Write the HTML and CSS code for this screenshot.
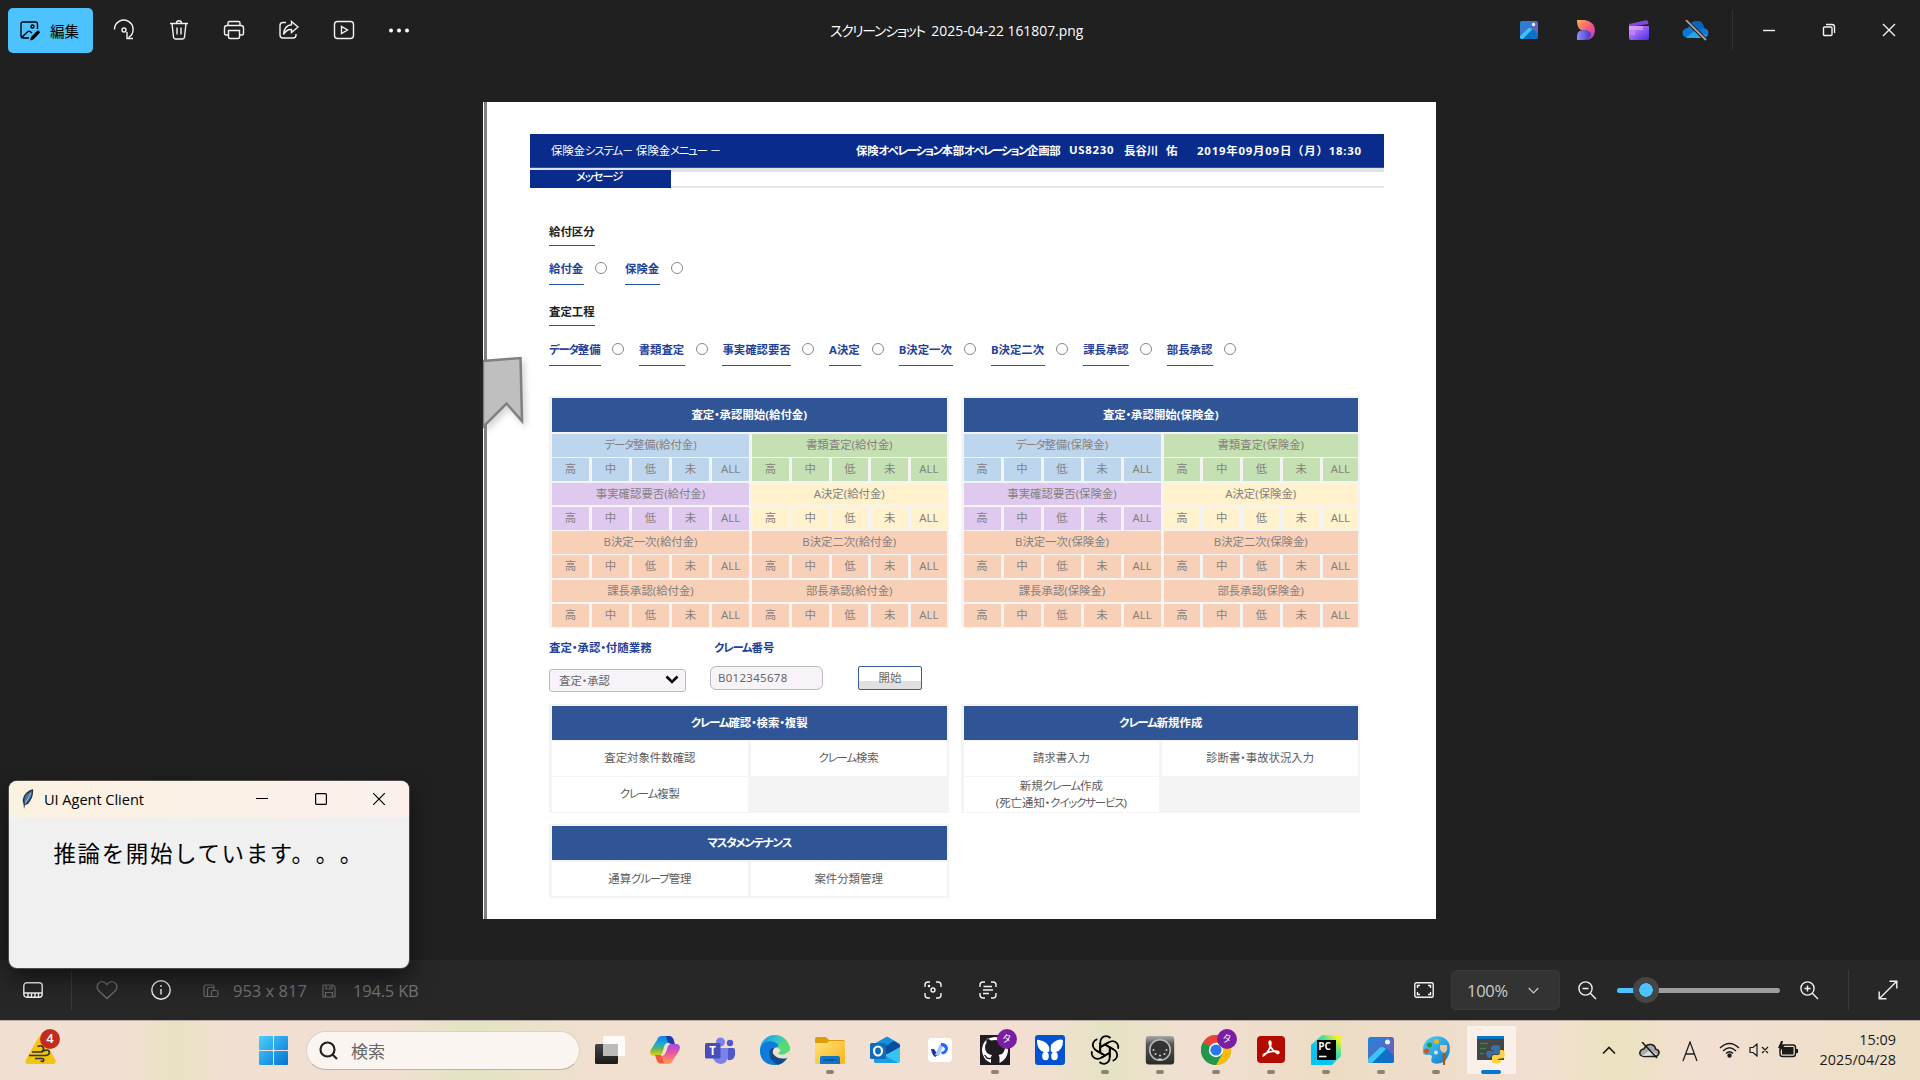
FILE: index.html
```html
<!DOCTYPE html>
<html lang="ja">
<head>
<meta charset="utf-8">
<title>スクリーンショット 2025-04-22 161807.png</title>
<link rel="stylesheet" href="styles.css">
</head>
<body>
<div class="screen">

<header class="topbar">
  <div class="edit">
    <svg width="20" height="20" viewBox="0 0 20 20" fill="none" stroke="#000" stroke-width="1.4"><path d="M9 17H3.2Q1 17 1 14.800V2.700Q1 1 3 1H15.500Q17.500 1 17.500 3V8M2 16L8 10.500Q9 9.700 10 10.500L12 12"/><circle cx="12.500" cy="5.500" r="1.500"/><path d="M10 19.500L11 16L17.500 9.500Q19.500 9 20 11.500L13.500 18.500Z" fill="#000" stroke="none"/></svg>
    <span>編集</span>
  </div>
  <nav class="tools">
    <i><svg width="22" height="22" viewBox="0 0 22 22" class="ln"><path d="M1.500 10.500A9.300 9.300 0 1 1 15.500 18.500M14 13V19.500H20"/><circle cx="11" cy="11" r="2"/></svg></i>
    <i><svg width="22" height="22" viewBox="0 0 22 22" class="ln"><path d="M2 4.500H20M4 4.500L5.500 18Q5.700 20 7.500 20H14.500Q16.300 20 16.500 18L18 4.500M8.500 4Q8.500 1.700 11 1.700Q13.500 1.700 13.500 4M9 8.500V15.500M13 8.500V15.500"/></svg></i>
    <i><svg width="22" height="22" viewBox="0 0 22 22" class="ln"><path d="M5 16H3Q1.500 16 1.500 14V9Q1.500 6.500 4 6.500H18Q20.500 6.500 20.500 9V14Q20.500 16 19 16H17M5 6.500V4Q5 2.500 6.500 2.500H15.500Q17 2.500 17 4V6.500M5.500 11.500H16.500V18Q16.500 19.500 15 19.500H7Q5.500 19.500 5.500 18Z"/></svg></i>
    <i><svg width="22" height="22" viewBox="0 0 22 22" class="ln"><path d="M8 3.500H5Q2 3.500 2 6.500V16Q2 19 5 19H15Q18 19 18 16V15M13.500 2.500L20 8L13.500 13.500V10.500Q8.500 10 5.500 15.500Q6 6.500 13.500 5.700Z"/></svg></i>
    <i><svg width="22" height="22" viewBox="0 0 22 22" class="ln"><rect x="1.500" y="2.500" width="19" height="17" rx="3"/><path d="M8.500 7.500V14.500L14.500 11Z"/></svg></i>
    <i><svg width="22" height="22" viewBox="0 0 22 22" fill="#fff"><circle cx="3" cy="11.500" r="2"/><circle cx="11" cy="11.500" r="2"/><circle cx="19" cy="11.500" r="2"/></svg></i>
  </nav>
  <div class="filename"><span class="kt">スクリーンショット</span> 2025-04-22 161807.png</div>
  <div class="apps">
    <svg width="18" height="18" viewBox="0 0 26 26"><use href="#photos"/></svg>
    <svg width="20" height="22" viewBox="0 0 20 22"><path d="M1 1H9Q19 3 19 12Q18 20 11 21Q14 15 10 11H5Q1 9 1 1Z" fill="url(#ds1)"/><path d="M1 21V17Q1 11 8 11Q14 11 15 15Q15 21 7 21Z" fill="url(#ds2)"/></svg>
    <svg width="20" height="20" viewBox="0 0 20 20"><path d="M0 4L17 .2Q19 0 19.300 2V4L0 7Z" fill="#8547d8"/><path d="M0 6H20V18Q20 20 18 20H2Q0 20 0 18Z" fill="url(#clip)"/><path d="M0 10H6V15H0Z" fill="#b884f8"/><path d="M0 6H14V10H0Z" fill="#e6a6f9" opacity=".6"/></svg>
    <svg width="27" height="21" viewBox="0 0 27 21"><path d="M6 18Q0 17 .5 12Q2 8 6 8Q9 0 16 1Q21 2 22 8Q27 9 26.500 14Q25 18 22 18Z" fill="#0a78d4"/><path d="M4 17.500L14 10L25 15.500Q24 18 21 18H6Z" fill="#28a8ea"/><path d="M11 3Q20-3 22 8L18 10Z" fill="#0364b8"/><path d="M4 0L24 20" stroke="#202020" stroke-width="4"/><path d="M4 0L24 20" stroke="#a6a19c" stroke-width="1.800"/></svg>
  </div>
  <div class="caption">
    <i><svg width="14" height="14" viewBox="0 0 14 14" class="ln"><path d="M1 7.500H13"/></svg></i>
    <i><svg width="14" height="14" viewBox="0 0 14 14" class="ln"><rect x="1.500" y="4" width="8.500" height="8.500" rx="1"/><path d="M4 1.500H10Q12.500 1.500 12.500 4V10" /></svg></i>
    <i><svg width="14" height="14" viewBox="0 0 14 14" class="ln"><path d="M1 1L13 13M13 1L1 13"/></svg></i>
  </div>
</header>

<main class="viewer">
  <article class="doc">
    <svg class="ribbon" width="48" height="80" viewBox="0 0 48 80"><path d="M0 6L37.500 3L39 66L23.500 48.500L0 72Z" fill="#bfbfbf" stroke="#808080" stroke-width="2.500"/></svg>
    <div class="page">
      <div class="banner">
        <div class="b-left">保険金<span class="k">システム</span>－ 保険金<span class="k">メニュー</span> －</div>
        <div class="b-right"><span class="dept">保険<span class="k">オペレーション</span>本部<span class="k">オペレーション</span>企画部</span><span class="uid">US8230</span><span class="nm">長谷川</span><span class="nm2">佑</span><span class="date">2019年09月09日（月）18:30</span></div>
      </div>
      <div class="msg"><div class="tab"><span class="k">メッセージ</span></div><div class="rule"></div></div>

      <div class="body">
        <div class="ul black w4 s1">給付区分</div>
        <div class="radios r1"><span class="ul w3">給付金</span><i class="rd"></i><span class="ul w3">保険金</span><i class="rd"></i></div>
        <div class="ul black w4 s2">査定工程</div>
        <div class="radios r2">
          <span class="ul w5"><span class="k">データ</span>整備</span><i class="rd"></i><span class="ul w4">書類査定</span><i class="rd"></i><span class="ul w6">事実確認要否</span><i class="rd"></i><span class="ul wa">A決定</span><i class="rd"></i><span class="ul wb">B決定一次</span><i class="rd"></i><span class="ul wb">B決定二次</span><i class="rd"></i><span class="ul w4">課長承認</span><i class="rd"></i><span class="ul w4">部長承認</span><i class="rd"></i>
        </div>

        <div class="pair">
          <section class="tbl">
            <h2>査定<span class="d">・</span>承認開始(給付金)</h2>
            <div class="grid">
              <b class="bl"><span class="k">データ</span>整備(給付金)</b><b class="gr">書類査定(給付金)</b>
              <u class="bl">高</u><u class="bl">中</u><u class="bl">低</u><u class="bl">未</u><u class="bl">ALL</u><u class="gr">高</u><u class="gr">中</u><u class="gr">低</u><u class="gr">未</u><u class="gr">ALL</u>
              <b class="pu">事実確認要否(給付金)</b><b class="ye">A決定(給付金)</b>
              <u class="pu">高</u><u class="pu">中</u><u class="pu">低</u><u class="pu">未</u><u class="pu">ALL</u><u class="ye">高</u><u class="ye">中</u><u class="ye">低</u><u class="ye">未</u><u class="ye">ALL</u>
              <b>B決定一次(給付金)</b><b>B決定二次(給付金)</b>
              <u>高</u><u>中</u><u>低</u><u>未</u><u>ALL</u><u>高</u><u>中</u><u>低</u><u>未</u><u>ALL</u>
              <b>課長承認(給付金)</b><b>部長承認(給付金)</b>
              <u>高</u><u>中</u><u>低</u><u>未</u><u>ALL</u><u>高</u><u>中</u><u>低</u><u>未</u><u>ALL</u>
            </div>
          </section>
          <section class="tbl">
            <h2>査定<span class="d">・</span>承認開始(保険金)</h2>
            <div class="grid">
              <b class="bl"><span class="k">データ</span>整備(保険金)</b><b class="gr">書類査定(保険金)</b>
              <u class="bl">高</u><u class="bl">中</u><u class="bl">低</u><u class="bl">未</u><u class="bl">ALL</u><u class="gr">高</u><u class="gr">中</u><u class="gr">低</u><u class="gr">未</u><u class="gr">ALL</u>
              <b class="pu">事実確認要否(保険金)</b><b class="ye">A決定(保険金)</b>
              <u class="pu">高</u><u class="pu">中</u><u class="pu">低</u><u class="pu">未</u><u class="pu">ALL</u><u class="ye">高</u><u class="ye">中</u><u class="ye">低</u><u class="ye">未</u><u class="ye">ALL</u>
              <b>B決定一次(保険金)</b><b>B決定二次(保険金)</b>
              <u>高</u><u>中</u><u>低</u><u>未</u><u>ALL</u><u>高</u><u>中</u><u>低</u><u>未</u><u>ALL</u>
              <b>課長承認(保険金)</b><b>部長承認(保険金)</b>
              <u>高</u><u>中</u><u>低</u><u>未</u><u>ALL</u><u>高</u><u>中</u><u>低</u><u>未</u><u>ALL</u>
            </div>
          </section>
        </div>

        <div class="labels"><span class="l1">査定<span class="d">・</span>承認<span class="d">・</span>付随業務</span><span><span class="k">クレーム</span>番号</span></div>
        <div class="form">
          <div class="select"><span>査定<span class="d">・</span>承認</span><svg width="14" height="10" viewBox="0 0 14 10" fill="none" stroke="#000" stroke-width="2.600"><path d="M1.500 1.500L7 7L12.500 1.500"/></svg></div>
          <div class="input">B012345678</div>
          <div class="start">開始</div>
        </div>

        <div class="pair menus">
          <section class="tbl menu">
            <h2><span class="k">クレーム</span>確認<span class="d">・</span>検索<span class="d">・</span>複製</h2>
            <div class="cells"><p>査定対象件数確認</p><p><span class="k">クレーム</span>検索</p><p><span class="k">クレーム</span>複製</p></div>
          </section>
          <section class="tbl menu">
            <h2><span class="k">クレーム</span>新規作成</h2>
            <div class="cells"><p>請求書入力</p><p>診断書<span class="d">・</span>事故状況入力</p><p class="two">新規<span class="k">クレーム</span>作成<br>(死亡通知<span class="d">・</span><span class="k">クイックサービス</span>)</p></div>
          </section>
        </div>
        <section class="tbl menu last">
          <h2><span class="k">マスタメンテナンス</span></h2>
          <div class="cells one"><p>通算<span class="k">グループ</span>管理</p><p>案件分類管理</p></div>
        </section>
      </div>
    </div>
  </article>
</main>

<footer class="status">
  <div class="st-left">
    <svg class="film ln" width="20" height="16" viewBox="0 0 20 16"><rect x=".8" y=".8" width="18.400" height="14.400" rx="3"/><path d="M1 11H19M5 11V15M8.500 11V15M12 11V15M15.500 11V15"/></svg>
    <i class="div"></i>
    <svg class="heart" width="22" height="20" viewBox="0 0 22 20" fill="none" stroke="#6a6a6a" stroke-width="1.400"><path d="M11 18.500L2.500 10.500Q0 7 2 4Q6-1 11 4.500Q16-1 20 4Q22 7 19.500 10.500Z"/></svg>
    <svg class="info ln" width="20" height="20" viewBox="0 0 20 20"><circle cx="10" cy="10" r="9.200"/><path d="M10 9V14.500M10 5V7"/></svg>
    <svg class="dim" width="16" height="14" viewBox="0 0 16 14"><path d="M4.500 12.500H2.500Q1 12.500 1 11V2.500Q1 1 2.500 1H9.500Q11 1 11 2.500V3.500M4.500 12.500V5.500Q4.500 3.500 6.500 3.500H9.500Q11 3.500 11 5V6.500M4.500 12.500H13.500Q15 12.500 15 11V8Q15 6.500 13.500 6.500H10Q8.500 6.500 8.500 8V12.500"/></svg>
    <span class="t1">953 x 817</span>
    <svg class="dim sv" width="14" height="14" viewBox="0 0 14 14"><path d="M1 1H11L13 3V13H1ZM4 1V5H10V1M3.500 13V8.500H10.500V13M8 2V4"/></svg>
    <span class="t2">194.5 KB</span>
  </div>
  <div class="st-mid">
    <svg width="18" height="18" viewBox="0 0 18 18" class="ln"><path d="M1 6V4Q1 1 4 1H6M12 1H14Q17 1 17 4V6M17 12V14Q17 17 14 17H12M6 17H4Q1 17 1 14V12"/><circle cx="9" cy="9" r="2"/><circle cx="5" cy="5" r=".6"/></svg>
    <svg width="18" height="18" viewBox="0 0 18 18" class="ln"><path d="M1 6V4Q1 1 4 1H6M12 1H14Q17 1 17 4V6M17 12V14Q17 17 14 17H12M6 17H4Q1 17 1 14V12M4.500 5.500H13M4 9H14M4 12.500H10"/></svg>
  </div>
  <div class="st-right">
    <svg class="fit ln" width="20" height="16" viewBox="0 0 20 16"><rect x=".8" y=".8" width="18.400" height="14.400" rx="1.500"/><path d="M3.500 6V3.500H6M14 3.500H16.500V6M16.500 10V12.500H14M6 12.500H3.500V10"/></svg>
    <div class="zoom">100%<svg width="11" height="7" viewBox="0 0 11 7" fill="none" stroke="#ccc" stroke-width="1.200"><path d="M.7 1L5.500 5.800L10.300 1"/></svg></div>
    <svg class="zo ln" width="19" height="19" viewBox="0 0 19 19"><circle cx="7.500" cy="7.500" r="6.600"/><path d="M12.300 12.300L18 18M4.500 7.500H10.500"/></svg>
    <div class="slider"><i></i></div>
    <svg class="zi ln" width="19" height="19" viewBox="0 0 19 19"><circle cx="7.500" cy="7.500" r="6.600"/><path d="M12.300 12.300L18 18M4.500 7.500H10.500M7.500 4.500V10.500"/></svg>
    <i class="div"></i>
    <svg class="ex ln" width="20" height="20" viewBox="0 0 20 20"><path d="M1.500 18.500L18.500 1.500M11.500 1.200H18.800V8.500M1.200 11.500V18.800H8.500"/></svg>
  </div>
</footer>

<div class="taskbar">
  <div class="weather">
    <svg width="32" height="30" viewBox="0 0 32 30"><path d="M12.500 5Q15.500-1 18.500 5L30.500 26Q31.500 30 28 30H3Q-.5 30 .7 26Z" fill="#f3c512"/><g fill="none" stroke="#333" stroke-width="1.700"><path d="M7 18H16Q19 17.500 18.500 14Q17 10.500 12.500 12.500M4 21.500H21Q25.500 20.500 24 17Q22 15 19 17M10 24.500H17Q20 25 18 27.500L15.500 27"/></g></svg>
    <span>4</span>
  </div>
  <svg class="win" width="29" height="29" viewBox="0 0 29 29" fill="url(#wn)"><rect width="14" height="14" rx="1"/><rect x="15" width="14" height="14" rx="1"/><rect y="15" width="14" height="14" rx="1"/><rect x="15" y="15" width="14" height="14" rx="1"/></svg>
  <div class="search"><svg width="19" height="19" viewBox="0 0 19 19" fill="none" stroke="#222" stroke-width="2.200"><circle cx="8.500" cy="8.500" r="7"/><path d="M13.500 13.500L18 18"/></svg>検索</div>
  <div class="pins">
    <i><svg width="30" height="30" viewBox="0 0 30 30"><rect x="0" y="9" width="23" height="20" rx="1.500" fill="url(#tv)"/><rect x="8" y="1" width="22" height="20" rx="1.500" fill="#fff" opacity=".85"/><path d="M8 9H23V21H8Z" fill="#bbb"/></svg></i>
    <i><svg width="30" height="30" viewBox="0 0 30 30"><path d="M7 5Q8 1 12 1H20Q23 2 24 6L18 8Q15 8 14 12L12 19Q11 21 8 21H3Q-1 20 .7 15Z" fill="url(#cp1)"/><path d="M23 25Q22 29 18 29H10Q7 28 6 23L12 21Q15 20 16 17L18 11Q19 9 22 9H27Q31 10 29.500 15Z" fill="url(#cp2)"/><path d="M16 1H20Q23 2 24 6L25 9H22Q18 9 17 5Z" fill="#1e3ea5"/><path d="M5 20H11L14 28H10Q7 27 5 20Z" fill="#f6573b"/></svg></i>
    <i><svg width="30" height="30" viewBox="0 0 30 30"><circle cx="15.500" cy="7" r="4.500" fill="#7b83eb"/><circle cx="25" cy="8" r="3.200" fill="#5059c9"/><path d="M19 13H28Q30 13 30 15V20Q29 26 23 25Z" fill="#5059c9"/><path d="M8 13H23V21Q22 29 15.500 29Q9 28 8 22Z" fill="#7b83eb"/><rect y="8" width="15.500" height="15.500" rx="1.500" fill="#464eb8"/><text x="4.300" y="20" font-family="Open Sans" font-weight="700" font-size="11.500" fill="#fff">T</text></svg></i>
    <i><svg width="30" height="30" viewBox="0 0 30 30"><circle cx="15" cy="15" r="15" fill="url(#ed)"/><path d="M1 12Q5 4 14 7Q21 10 17 14Q10 12 9 20Q10 27 18 30Q0 31 0 15Z" fill="#0c7bd9"/><path d="M9 17Q11 11 16 14Q14 20 21 22Q25 22 28 21Q25 28 18 30Q9 27 9 17Z" fill="#114a8b"/><path d="M13 15Q15 11 19 13Q22 16 18 18Q20 21 25 19Q29 17 30 15Q30 22 27 23Q19 25 14 20Q12 18 13 15Z" fill="#f0dfd0"/><path d="M17 13Q24 14 20 18Q24 20 28 17Q30 15 30 12Q27 8 20 8Z" fill="#55db76"/></svg></i>
    <i class="run"><svg width="30" height="30" viewBox="0 0 30 30"><path d="M0 4Q0 2 2 2H11L14 5H28Q30 5 30 7V14H0Z" fill="#e09b0b"/><path d="M0 8H12L14 6H29Q30 6 30 8V27Q30 29 28 29H2Q0 29 0 27Z" fill="url(#fd)"/><path d="M5 29V23Q5 21 7 21H23Q25 21 25 23V29Z" fill="#0f76c8"/><path d="M8.500 25H21.500" stroke="#064f8c" stroke-width="1.500"/></svg></i>
    <i><svg width="30" height="30" viewBox="0 0 30 30"><path d="M4 9L16 2Q17 1.500 18 2L30 9V12L14 18H4Z" fill="#1490df"/><path d="M14 12L24 6L30 10V13L17 21Z" fill="#0a4d9e"/><path d="M4 15L14 21L30 12V26Q30 28 28 28H6Q4 28 4 26Z" fill="#36c5f0"/><path d="M4 14L28 28H6Q4 28 4 26Z" fill="#1b9de2"/><rect y="8" width="16" height="16" rx="1.500" fill="#0f6cbd"/><ellipse cx="8" cy="16" rx="4" ry="4.500" fill="none" stroke="#fff" stroke-width="2.200"/></svg></i>
    <i><svg width="30" height="30" viewBox="0 0 30 30"><rect x="3" y="3" width="24" height="24" rx="4" fill="#fff"/><path d="M6 14H9L13 20L10 22Q7 20 6 14Z" fill="#20349f"/><path d="M10 20L15 9L18 11L14 21Z" fill="#a7c4ff"/><path d="M16 8H18Q23 9 23 14Q22 19 17 19.500L16 17Q20 16 20 13.500Q19 11 16 11Z" fill="#246bfd"/></svg></i>
    <i class="run"><svg width="30" height="30" viewBox="0 0 30 30"><rect width="30" height="30" fill="#1f1b20"/><path d="M11 28V24Q6 25 5 21L3.500 20Q5.500 19 7 22Q8.500 23.500 11 22.500Q11 21 12 20Q5 19 5 12Q5 9.500 6.500 8Q6 6 7 3.500Q9 4 11 5.500Q15 4.500 19 5.500Q21 4 23 3.500Q24 6 23.500 8Q25 10 25 12Q25 19 18.500 20Q19.500 21 19.500 23V28Q27 24.500 28 16Q28 3 15 2Q2 3 2 16Q3 25 11 28Z" fill="#fff"/></svg><em>タ</em></i>
    <i><svg width="30" height="30" viewBox="0 0 30 30"><rect width="30" height="30" rx="3" fill="#0153d0"/><path d="M15 16Q12 18 9 17Q2 15 2 6Q2 4 4 5Q12 6 14.500 13Q17 6 25 4.500Q28 4 28 6Q28 15 21 17Q18 18 15 16Z" fill="#fff"/><ellipse cx="10.500" cy="21" rx="3.300" ry="4.300" fill="#fff"/><ellipse cx="19.500" cy="21" rx="3.300" ry="4.300" fill="#fff"/><path d="M15 4V30" stroke="#0153d0" stroke-width="1.500"/></svg></i>
    <i class="run"><svg width="30" height="30" viewBox="0 0 30 30" fill="none" stroke="#000" stroke-width="1.800"><g id="kn2"><g id="kn"><path d="M10.200 17.800V8.500Q10.200 2 15.500 1.200Q18.500 1 20.500 3M10.200 12.300L18.800 7.300"/></g><use href="#kn" transform="rotate(60 15 15)"/><use href="#kn" transform="rotate(120 15 15)"/></g><use href="#kn2" transform="rotate(180 15 15)"/></svg></i>
    <i class="run"><svg width="30" height="30" viewBox="0 0 30 30"><rect x=".8" y="1" width="28.400" height="28.500" rx="3" fill="url(#mt)"/><circle cx="15" cy="15" r="10.300" fill="#333" stroke="#bbb" stroke-width="1.500"/><g fill="#ccc"><circle cx="8.500" cy="15" r="1"/><circle cx="21.500" cy="15" r="1"/><circle cx="10.500" cy="19" r="1"/><circle cx="19.500" cy="19" r="1"/><circle cx="15" cy="20.500" r="1"/><rect x="13" y="23.500" width="4" height="2"/></g></svg></i>
    <i class="run"><svg width="30" height="30" viewBox="0 0 30 30"><circle cx="15" cy="15" r="15" fill="#34a853"/><path d="M15 15L2 7.500A15 15 0 0 1 28 7.500Z" fill="#ea4335"/><path d="M15 7.500H28A15 15 0 0 1 15 30L21.500 19Z" fill="#fbbc05"/><path d="M15 15L2 7.500A15 15 0 0 0 15 30L20 20Z" fill="#23964a"/><circle cx="15" cy="15" r="7.200" fill="#fff"/><circle cx="15" cy="15" r="5.600" fill="#2b76e8"/></svg><em>タ</em></i>
    <i class="run"><svg width="30" height="30" viewBox="0 0 30 30"><rect x="1" y="1" width="28" height="27" rx="4" fill="#b30b00"/><path d="M7.500 20.500Q12 18 14.500 11Q15.500 6.500 14 6Q12.300 6.500 14 11Q16.500 16 21.500 18.500Q23.500 18 22.500 16.500Q17 15 9.500 18.500Q6.500 20 7.500 21.500" fill="none" stroke="#fff" stroke-width="1.700"/></svg></i>
    <i class="run"><svg width="30" height="30" viewBox="0 0 30 30"><path d="M0 10L11 0H30V21L21 30H0Z" fill="url(#pc)"/><rect x="6" y="5" width="19" height="20" fill="#000"/><text x="7.300" y="14.800" font-family="Open Sans" font-weight="700" font-size="10" fill="#fff">PC</text><path d="M8 21.500H15.500" stroke="#fff" stroke-width="1.600"/></svg></i>
    <i class="run"><svg width="26" height="26" viewBox="0 0 26 26"><g id="photos"><rect width="26" height="26" rx="2.500" fill="url(#ph)"/><path d="M1 22L14 10Q16 9 18 11L26 19V24Q26 26 24 26H3Q0 26 1 22Z" fill="#0f6fc9"/><path d="M0 22L12 10.500Q15 9 18 12L4 26H2Q0 26 0 24Z" fill="#39c5f5"/><circle cx="19.500" cy="5" r="2.500" fill="#e8f4ff"/></g></svg></i>
    <i class="run"><svg width="30" height="30" viewBox="0 0 30 30"><path d="M2 17Q1 6 11 2Q23-1 28 8Q31 18 24 26Q18 30 12 28Q9 26 11 22Q11 19 6 20Q2 20 2 17Z" fill="url(#pa)"/><circle cx="15.500" cy="6.500" r="2.500" fill="#f0b514"/><circle cx="8.500" cy="10" r="2.500" fill="#2b9a2e"/><circle cx="5.500" cy="16" r="2.500" fill="#d4501f"/><circle cx="15" cy="17.500" r="2" fill="#eee0d0"/><path d="M21.500 18H24.500L24 30H22Z" fill="#a35b1a"/><path d="M19 10H26V15Q25 18 23 18Q20 17 19 14Z" fill="#e8c592"/></svg></i>
    <i class="run act"><svg width="30" height="30" viewBox="0 0 30 30"><rect x="1" y="1" width="27" height="24" fill="#454547"/><path d="M1 1H28V4H1Z" fill="#0d78c9"/><path d="M4 8.500H12M4 13.500H10M4 18.500H8" stroke="#2e8b35" stroke-width="1.300"/><path d="M16 11Q20 9 24 11V17Q24 19 22 19H17Q15 19 15 22L12 23Q9 19 11 16H18V15H15V12Z" fill="#3573a6"/><path d="M24 15H27Q30 18 28 23L22 24V25H25V27Q21 30 16 27.500V22Q16 20 18 20H22Q24 20 24 18Z" fill="#fdd33f"/></svg></i>
  </div>
  <div class="tray">
    <svg class="c1" width="14" height="9" viewBox="0 0 14 9" fill="none" stroke="#1b1b1b" stroke-width="1.700"><path d="M1 7.500L7 1.500L13 7.500"/></svg>
    <svg class="c2" width="21" height="17" viewBox="0 0 21 17"><path d="M5 14.500Q0 14 1 10Q2 7 5 7Q7 2 12 2.500Q16 3 16.500 7Q20.500 8 20 11Q19 14.500 16 14.500Z" fill="#aaa" stroke="#1b1b1b" stroke-width="1.500"/><path d="M3 14L11 8L19 13" fill="#ddd"/><path d="M3 0L18 16" stroke="#1b1b1b" stroke-width="1.600"/></svg>
    <svg class="c3" width="16" height="21" viewBox="0 0 16 21" fill="none" stroke="#222" stroke-width="1.300"><path d="M1 20L8 1L15 20M3.700 13H12.300"/></svg>
    <svg class="c4" width="21" height="16" viewBox="0 0 21 16" fill="none" stroke="#1b1b1b" stroke-width="1.400"><path d="M1 6Q10.500-3 20 6M4 9Q10.500 2.500 17 9M7 11.500Q10.500 8 14 11.500"/><circle cx="10.500" cy="13.500" r="1.500" fill="#1b1b1b"/></svg>
    <svg class="c5" width="20" height="14" viewBox="0 0 20 14" fill="none" stroke="#1b1b1b" stroke-width="1.200"><path d="M1 4.500H4L8 1V13L4 9.500H1ZM13 4L19 10M19 4L13 10"/></svg>
    <svg class="c6" width="21" height="17" viewBox="0 0 21 17"><rect x="2" y="4" width="15.500" height="11.500" rx="2.500" fill="none" stroke="#1b1b1b" stroke-width="1.400"/><rect x="4" y="6" width="11.500" height="7.500" fill="#1b1b1b"/><path d="M18 8H20V12H18ZM3 0L0 7H2.500L1.500 11L7 4H4L5 0Z" fill="#1b1b1b"/></svg>
    <div class="clock"><span>15:09</span><span class="dt">2025/04/28</span></div>
  </div>
</div>

<div class="dialog">
  <div class="dlg-title">
    <svg width="12" height="20" viewBox="0 0 12 20"><path d="M11 0Q12 8 6 15L3 16L2 20L1.500 15Q-1 9 4 4Q7 1 11 0Z" fill="#333"/><path d="M10 2Q10 8 5 13.500L3 14Q1 9 5 5Z" fill="#3f78b4"/><path d="M9 4L3 15" stroke="#cde" stroke-width=".7"/></svg>
    <span>UI Agent Client</span>
    <svg class="m" width="12" height="12" viewBox="0 0 12 12" stroke="#000" stroke-width="1.100"><path d="M0 5.500H12"/></svg>
    <svg class="x" width="12" height="12" viewBox="0 0 12 12" fill="none" stroke="#000" stroke-width="1.200"><rect x=".6" y=".6" width="10.800" height="10.800" rx="1"/></svg>
    <svg class="x" width="12" height="12" viewBox="0 0 12 12" stroke="#000" stroke-width="1.200"><path d="M0 0L12 12M12 0L0 12"/></svg>
  </div>
  <div class="dlg-msg">推論を開始しています。。。</div>
</div>
</div>

<svg width="0" height="0" class="defs"><defs>
  <linearGradient id="wn" x2="1" y2="1" gradientUnits="userSpaceOnUse" gradientTransform="scale(29)"><stop stop-color="#4dd0fb"/><stop offset="1" stop-color="#0073d6"/></linearGradient>
  <linearGradient id="ph" x2="1" y2="1"><stop stop-color="#1a87d8"/><stop offset="1" stop-color="#8a52b5"/></linearGradient>
  <linearGradient id="ds1" x2="1" y2="1"><stop stop-color="#ffb24d"/><stop offset=".5" stop-color="#f55a7a"/><stop offset="1" stop-color="#a43be0"/></linearGradient>
  <linearGradient id="ds2" x2="1"><stop stop-color="#8d8cff"/><stop offset="1" stop-color="#4a38c4"/></linearGradient>
  <linearGradient id="clip" x2="1" y2="1"><stop stop-color="#d896fa"/><stop offset="1" stop-color="#4c2ae8"/></linearGradient>
  <linearGradient id="tv" x2="0" y2="1"><stop stop-color="#444"/><stop offset="1" stop-color="#1a1a1a"/></linearGradient>
  <linearGradient id="cp1" x2="0" y2="1"><stop stop-color="#1b7be8"/><stop offset=".35" stop-color="#1aa5dd"/><stop offset=".65" stop-color="#5cb85a"/><stop offset="1" stop-color="#f6d10a"/></linearGradient>
  <linearGradient id="cp2" x2="0" y2="1"><stop stop-color="#a34be8"/><stop offset=".5" stop-color="#ee5a94"/><stop offset="1" stop-color="#fca452"/></linearGradient>
  <linearGradient id="ed" x2="1" y2=".4"><stop stop-color="#1a8fe0"/><stop offset=".5" stop-color="#2fc0d5"/><stop offset="1" stop-color="#6be34a"/></linearGradient>
  <linearGradient id="fd" x2="1" y2="1"><stop stop-color="#ffe17a"/><stop offset="1" stop-color="#f9b514"/></linearGradient>
  <linearGradient id="mt" x2="0" y2="1"><stop stop-color="#aaa"/><stop offset=".3" stop-color="#555"/><stop offset="1" stop-color="#2a2a2a"/></linearGradient>
  <linearGradient id="pc" x2="1" y1="1" y2="0"><stop offset=".35" stop-color="#07c3f2"/><stop offset=".65" stop-color="#4be09a"/><stop offset=".9" stop-color="#f5f22a"/></linearGradient>
  <linearGradient id="pa" x2="1" y2="1"><stop stop-color="#4ad5f7"/><stop offset="1" stop-color="#0f78cf"/></linearGradient>
</defs></svg>
</body>
</html>
```
FILE: styles.css
```css
* { box-sizing: border-box; margin: 0; padding: 0; }
body { width: 1920px; height: 1080px; overflow: hidden; background: #202020; font-family: "Open Sans", "Noto Sans CJK JP", sans-serif; }
i, em, u { font-style: normal; text-decoration: none; }
svg { display: block; flex: none; }
.defs { position: absolute; }
.ln { fill: none; stroke: #f2f2f2; stroke-width: 1.4; }
.screen { position: relative; width: 1920px; height: 1080px; display: flex; flex-direction: column; }

/* top command bar */
.topbar { height: 60px; flex: none; display: grid; grid-template-columns: 93px 334px 1fr 216px 187px; align-items: center; color: #fff; background: #202020; }
.edit { margin: 1px 0 0 8px; height: 45px; width: 85px; border-radius: 5px; background: #4cc2ff; color: #000; display: flex; align-items: center; gap: 10px; padding-left: 12px; font: 14.5px "Noto Sans CJK JP", sans-serif; }
.tools { display: flex; padding-left: 3.5px; }
.tools i { width: 55px; display: flex; justify-content: center; }
.filename { justify-self: start; padding-left: 403px; font-size: 13.9px; letter-spacing: 0; white-space: pre; }
.kt { font-feature-settings: "palt"; letter-spacing: -1.3px; padding-right: 3px; }
.apps { display: flex; align-items: center; padding-left: 3px; gap: 34px; width: 216px; }
.apps svg + svg { margin-left: 4px; }
.apps svg:nth-child(3) { margin-left: -1px; }
.apps svg:nth-child(4) { margin-left: -1px; }
.caption { display: flex; border-left: 1px solid #323232; height: 40px; padding-left: 6px; align-items: center; margin-left: -1px; }
.caption i { width: 60px; display: flex; justify-content: center; }

/* image being viewed */
.viewer { height: 900px; flex: none; padding: 42px 0 0 483px; background: #202020; }
.doc { position: relative; width: 953px; height: 817px; background: linear-gradient(90deg, #fff 1px, #808080 1px, #808080 4px, #fff 4px); font-size: 11.4px; color: #777; font-family: "Noto Sans", "Noto Sans CJK JP", sans-serif; }
.ribbon { position: absolute; left: 0; top: 253px; filter: drop-shadow(3px 4px 3px #9996); }
.page { padding: 32px 52px 0 47px; }
.k { font-feature-settings: "palt"; letter-spacing: -1.1px; }
.d { letter-spacing: -3px; margin-left: -3px; }
.banner { height: 34px; background: #092c8c; border-bottom: 1px solid #355198; display: flex; justify-content: space-between; align-items: center; color: #fff; padding: 0 22px 1px 21px; white-space: nowrap; }
.b-left { letter-spacing: -.1px; }
.b-right { display: flex; font-weight: 700; }
.b-right > span { display: block; }
.dept { width: 213px; letter-spacing: -.2px; }
.dept .k { letter-spacing: -1.5px; }
.uid { width: 55px; letter-spacing: .7px; }
.nm { width: 42px; }
.nm2 { width: 31px; }
.date { width: 165px; letter-spacing: .8px; }
.msg { display: flex; height: 20px; border-top: 2px solid #e0e2e4; }
.tab { width: 141px; height: 18px; background: #092c8c; color: #fff; text-align: center; line-height: 13px; font-weight: 500; padding-right: 3px; }
.rule { flex: 1; border-top: 2px solid #e0e2e4; border-bottom: 2px solid #e4e8ec; }

.body { padding-left: 19px; color: #1f429b; }
.ul { display: block; height: 22px; line-height: 16px; border-bottom: 1.500px solid #2450ae; font-weight: 700; white-space: nowrap; }
.black { color: #222; }
.w3 { width: 34.5px; } .w4 { width: 46px; } .w5 { width: 52px; } .w6 { width: 69px; } .wa { width: 32px; } .wb { width: 54.5px; }
.s1 { margin-top: 36px; }
.radios { display: flex; }
.radios .ul { height: 24px; }
.rd { width: 12px; height: 12px; border: 1px solid #888; border-radius: 50%; margin: 1px 14.700px 0 11px; }
.r1 { margin-top: 15px; height: 24px; }
.r1 .rd { margin-right: 18.5px; }
.s2 { margin-top: 19px; }
.r2 { margin-top: 16px; height: 24px; }

.pair { display: flex; gap: 12px; margin-top: 30px; align-items: flex-start; }
.tbl { width: 399.500px; flex: none; background: #f4f4f5; padding: 2px 2px 1px 3px; }
.tbl h2 { height: 34px; line-height: 33px; background: #2f5596; color: #fff; text-align: center; font-size: 11.4px; font-weight: 700; }
.grid { display: grid; grid-template-columns: repeat(5, 37px) repeat(4, 36.800px) 1fr; grid-auto-rows: 22.700px; gap: 1.600px 3px; padding-top: 2px; color: #85807f; }
.grid b, .grid u { background: #f8d0b8; text-align: center; line-height: 22px; font-weight: 400; }
.grid b { grid-column: span 5; }
.grid .bl { background: #bdd6ee; } .grid .gr { background: #c5e0b3; } .grid .pu { background: #dfc9ef; } .grid .ye { background: #fff2cc; }

.labels { margin-top: 12px; height: 18px; line-height: 16px; display: flex; font-weight: 700; }
.l1 { width: 165px; letter-spacing: .1px; }
.form { display: flex; height: 26px; margin-top: 8px; align-items: flex-start; color: #666; }
.select { width: 137px; height: 23px; margin-top: 3px; background: #f7f3f8; border: 1px solid #bbb; border-radius: 3px; display: flex; justify-content: space-between; align-items: center; padding: 0 6px 0 9px; }
.input { width: 113px; height: 24px; margin: 0 35px 0 24px; background: #f7f3f8; border: 1px solid #bbb; border-radius: 6px; line-height: 21px; padding-left: 7px; letter-spacing: .35px; }
.start { width: 64px; height: 24px; border: 1.500px solid #3a5c98; border-radius: 2px; background: linear-gradient(#fff 65%, #e0e0e0 65%); text-align: center; line-height: 21px; }
.menus { margin-top: 12px; }
.cells { display: grid; grid-template-columns: 1fr 1fr; grid-auto-rows: 34.500px; gap: 1.500px 3px; padding: 1.500px 0 .500px; color: #5c5c5c; }
.cells p { background: #fff; line-height: 34px; text-align: center; white-space: nowrap; }
.cells p.two { line-height: 17px; }
.last { margin-top: 11px; }

/* viewer status bar */
.status { height: 60px; flex: none; background: #272727; display: grid; grid-template-columns: 700px 600px 1fr; align-items: center; color: #747474; font-size: 16.5px; }
.st-left, .st-right, .st-mid { display: flex; align-items: center; }
.st-left { height: 60px; }
.film { margin-left: 23px; }
.div { width: 1px; height: 40px; background: #3a3a3a; }
.film + .div { margin-left: 28px; }
.heart { margin-left: 24px; }
.info { margin: -1px 0 0 33px; }
.dim { fill: none; stroke: #6b6b6b; stroke-width: 1.2; margin: 1px 0 0 32px; }
.t1 { width: 74px; margin-left: 14px; letter-spacing: 0; white-space: nowrap; }
.sv { margin-left: 15px; }
.t2 { margin-left: 17px; letter-spacing: -.2px; white-space: nowrap; }
.st-mid { padding-left: 224px; gap: 37px; height: 59px; align-self: start; }
.fit { margin-left: 114px; }
.zoom { width: 109px; height: 40px; margin-left: 17px; border: 1px solid #3a3a3a; border-radius: 5px; background: #333; color: #ccc; display: flex; align-items: center; padding-left: 15px; gap: 20px; letter-spacing: -.3px; }
.zo { margin-left: 18px; }
.slider { position: relative; width: 163px; height: 5px; border-radius: 3px; margin-left: 20px; background: linear-gradient(90deg, #4cc2ff 29px, #9d9d9d 29px); }
.slider i { position: absolute; left: 16px; top: -11px; width: 26px; height: 26px; border-radius: 50%; background: radial-gradient(circle, #4cc2ff 6.5px, #454545 7px); }
.zi { margin-left: 20px; }
.zi + .div { margin-left: 29px; }
.ex { margin-left: 29px; }

/* taskbar */
.taskbar { height: 60px; flex: none; display: flex; align-items: center; padding-bottom: 1px; border-top: 1px solid #b9aea5; background: linear-gradient(90deg, #f1dfd2 0, #f1dfd2 130px, #e9e2c2 175px, #f1dfd2 225px, #f1dfd2 390px, #e2e4c2 470px, #f1dfd0 590px, #f2dfd2 1040px, #e5e3c4 1110px, #f1dfd2 1190px, #eddcc4 1330px, #f1dfd2 1540px, #ece2bf 1610px, #f1dfd2 1700px, #eddfc5 1920px); }
.weather { position: relative; width: 32px; margin: -2px 0 0 25px; }
.weather span { position: absolute; left: 15px; top: -5px; width: 20px; height: 20px; border-radius: 50%; background: #c42b1c; color: #fff; font-size: 13px; line-height: 19px; text-align: center; font-weight: 600; }
.win { margin-left: 202px; }
.search { width: 274px; height: 39px; border-radius: 20px; margin-left: 18px; background: #faf5f0; border: 1px solid #ddd0c6; border-bottom-color: #bdb0a5; display: flex; align-items: center; padding-left: 12px; gap: 13px; color: #666; font: 17px "Noto Sans CJK JP", sans-serif; }
.pins { display: flex; margin-left: 2px; }
.pins > i { position: relative; width: 55.1px; height: 48px; display: flex; align-items: center; justify-content: center; }
.pins .run::after { content: ""; position: absolute; left: 23.500px; bottom: 0; width: 8px; height: 4px; border-radius: 2px; background: #8b8179; }
.pins .act { background: linear-gradient(90deg, transparent 3.500px, #f9f0e9 3.500px, #f9f0e9 51.500px, transparent 51.500px); }
.pins .act::after { width: 20px; left: 17.500px; background: #0078d4; }
.pins em { position: absolute; left: 29px; top: 3px; width: 20px; height: 20px; border-radius: 50%; background: #7b1fa2; color: #fff; font-size: 9px; line-height: 19px; text-align: center; }
.tray { flex: 1; display: flex; align-items: center; }
.c1 { margin-left: 83px; }
.c2 { margin-left: 23px; }
.c3 { margin: 2px 0 0 22px; }
.c4 { margin-left: 21px; }
.c5 { margin-left: 9px; }
.c6 { margin: -2px 0 0 9px; }
.clock { margin: -1px 24px 0 auto; text-align: right; font-size: 14.4px; line-height: 20px; color: #1b1b1b; display: flex; flex-direction: column; }

/* floating client window */
.dialog { position: absolute; left: 9px; top: 781px; width: 400px; height: 187px; border-radius: 8px; background: #f0f0f0; box-shadow: 0 0 0 1px #4b4b4b, 0 10px 24px #0008; overflow: hidden; color: #000; }
.dlg-title { height: 37px; padding-bottom: 1px; background: linear-gradient(90deg, #faf2e1, #faf1e8 60%, #fbf0ec); display: flex; align-items: center; padding-left: 13px; font-size: 14.6px; }
.dlg-title span { width: 212px; margin-left: 10px; letter-spacing: -.05px; }
.dlg-title .x { margin-left: 46.500px; }
.dlg-title .m { margin-left: 0; }
.dlg-msg { font-family: "Noto Sans CJK JP", sans-serif; text-spacing-trim: space-all; font-feature-settings: "chws" 0, "halt" 0; font-size: 22.500px; letter-spacing: 1.600px; line-height: 34px; margin: 17px 0 0 44.500px; white-space: nowrap; }
```
